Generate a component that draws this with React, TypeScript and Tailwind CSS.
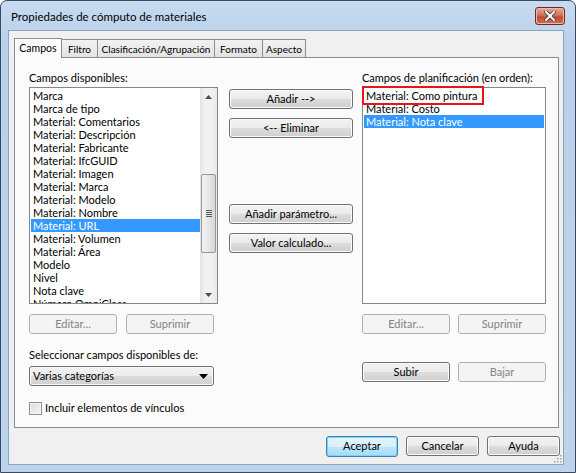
const ui = { fontFamily: '"Segoe UI", Lato, "Noto Sans", sans-serif' }

const available = [
	'Marca',
	'Marca de tipo',
	'Material: Comentarios',
	'Material: Descripción',
	'Material: Fabricante',
	'Material: IfcGUID',
	'Material: Imagen',
	'Material: Marca',
	'Material: Modelo',
	'Material: Nombre',
	'Material: URL',
	'Material: Volumen',
	'Material: Área',
	'Modelo',
	'Nivel',
	'Nota clave',
	'Número OmniClass',
]

const scheduled = ['Material: Como pintura', 'Material: Costo', 'Material: Nota clave']

const tabs = [
	{ label: 'Campos', width: 'w-[48px]' },
	{ label: 'Filtro', width: 'w-[37px]' },
	{ label: 'Clasificación/Agrupación', width: 'w-[118px]' },
	{ label: 'Formato', width: 'w-[49px]' },
	{ label: 'Aspecto', width: 'w-[44px]' },
]

interface BtnProps {
	readonly label: string
	readonly width: string
	readonly disabled?: boolean
	readonly isDefault?: boolean
}

function Btn({ label, width, disabled, isDefault }: BtnProps) {
	if (disabled) {
		return (
			<div
				className={`flex h-[20px] ${width} items-center justify-center whitespace-nowrap rounded-[3px] border border-[#adb2b5] bg-[#f4f4f4] text-[11px] text-[#838383]`}
			>
				{label}
			</div>
		)
	}
	if (isDefault) {
		return (
			<div
				className={`flex h-[21px] ${width} items-center justify-center whitespace-nowrap rounded-[3px] border border-[#3c7fb1] bg-[linear-gradient(#e5f4fc_0%,#d9effb_50%,#bde6fd_50%,#a7d9f5_100%)] text-[11px] text-black shadow-[inset_0_0_0_1px_#7ad6f9]`}
			>
				{label}
			</div>
		)
	}
	return (
		<div
			className={`flex h-[20px] ${width} items-center justify-center whitespace-nowrap rounded-[3px] border border-[#707070] bg-[linear-gradient(#f2f2f2_0%,#ebebeb_50%,#dddddd_50%,#cfcfcf_100%)] text-[11px] text-black shadow-[inset_0_0_0_1px_#fcfcfc]`}
		>
			{label}
		</div>
	)
}

function ScrollBar() {
	return (
		<div className="flex h-full w-[17px] flex-col bg-[linear-gradient(90deg,#e3e3e3,#f1f1f1_30%,#f1f1f1_70%,#e8e8e8)]">
			<div className="flex h-[17px] items-center justify-center">
				<svg width="7" height="4" viewBox="0 0 7 4">
					<path d="M0 4 L3.5 0 L7 4 Z" fill="#4d4d4d" />
				</svg>
			</div>
			<div className="h-[69px]" />
			<div className="mx-[1px] flex h-[79px] items-center justify-center rounded-[2px] border border-[#979797] bg-[linear-gradient(90deg,#f3f3f3,#e6e6e6_50%,#d6d6d6)]">
				<div className="flex flex-col gap-[1px]">
					<div className="h-[1px] w-[6px] bg-[#555]" />
					<div className="h-[1px] w-[6px] bg-[#555]" />
					<div className="h-[1px] w-[6px] bg-[#555]" />
					<div className="h-[1px] w-[6px] bg-[#555]" />
				</div>
			</div>
			<div className="flex-1" />
			<div className="flex h-[17px] items-center justify-center">
				<svg width="7" height="4" viewBox="0 0 7 4">
					<path d="M0 0 L3.5 4 L7 0 Z" fill="#4d4d4d" />
				</svg>
			</div>
		</div>
	)
}

export default function App() {
	return (
		<div
			className="relative h-[473px] w-[576px] overflow-hidden rounded-t-[7px] border border-[#3a4a5c] bg-[linear-gradient(#c7dbf1,#b9d1ea_40px,#bcd3eb)]"
			style={ui}
		>
			{/* title bar */}
			<div className="flex h-[29px] items-center justify-between pl-[10px] pr-[10px]">
				<span className="pt-[2px] text-[11.5px] text-black">Propiedades de cómputo de materiales</span>
				<div className="mt-[1px] flex h-[18px] w-[30px] items-center justify-center rounded-[3px] border border-[#6d2a22] bg-[linear-gradient(#e9a99b,#d2715e_45%,#c04a33_55%,#d26f52)] shadow-[inset_0_0_0_1px_#f0b7a9]">
					<svg width="12" height="10" viewBox="0 0 12 10">
						<path d="M2 1 L10 9 M10 1 L2 9" stroke="#3a3a3a" strokeWidth="3.6" strokeLinecap="square" />
						<path d="M2 1 L10 9 M10 1 L2 9" stroke="#ffffff" strokeWidth="2" strokeLinecap="square" />
					</svg>
				</div>
			</div>

			{/* client */}
			<div className="relative ml-[7px] flex h-[435px] w-[556px] flex-col border border-[#8ea4bd] bg-[#f0f0f0]">
				{/* tabs */}
				<div className="ml-[5px] mt-[7px] flex h-[19px] shrink-0 items-end">
					{tabs.map((t, i) =>
						i === 0 ? (
							<div
								key={t.label}
								className={`relative z-10 -mb-[1px] flex h-[20px] ${t.width} items-center justify-center border border-b-0 border-[#898c95] bg-[#fcfcfc] text-[10.5px] text-black`}
							>
								{t.label}
							</div>
						) : (
							<div
								key={t.label}
								className={`-ml-[1px] flex h-[18px] ${t.width} items-center justify-center whitespace-nowrap border border-b-0 border-[#898c95] bg-[linear-gradient(#f2f2f2,#e3e3e3)] pt-[1px] text-[10px] text-black`}
							>
								{t.label}
							</div>
						),
					)}
				</div>

				{/* panel */}
				<div className="ml-[5px] flex h-[371px] w-[545px] shrink-0 border border-[#898c95] bg-[#fbfbfb] pl-[14px] pt-[12px]">
					{/* left column */}
					<div className="flex w-[189px] flex-col">
						<div className="h-[17px] whitespace-nowrap text-[11px] leading-[15px] text-black">Campos disponibles:</div>
						<div className="flex h-[217px] border border-[#828790] bg-white">
							<div className="flex-1 overflow-hidden pl-[1px] pt-[1px]">
								{available.map((f) => (
									<div
										key={f}
										className={`h-[13px] whitespace-nowrap pl-[2px] text-[11px] leading-[13px] ${f === 'Material: URL' ? 'bg-[#3399ff] text-white' : 'text-black'}`}
									>
										{f}
									</div>
								))}
							</div>
							<ScrollBar />
						</div>
						<div className="mt-[10px] flex gap-[9px]">
							<Btn label="Editar..." width="w-[88px]" disabled />
							<Btn label="Suprimir" width="w-[88px]" disabled />
						</div>
						<div className="mt-[13px] whitespace-nowrap text-[11px] leading-[16px] text-black">Seleccionar campos disponibles de:</div>
						<div className="mt-[3px] flex h-[20px] w-[185px] items-center justify-between rounded-[3px] border border-[#707070] bg-[linear-gradient(#f2f2f2_0%,#ebebeb_50%,#dddddd_50%,#cfcfcf_100%)] pl-[3px] pr-[5px] text-[11px] text-black shadow-[inset_0_0_0_1px_#fcfcfc]">
							<span>Varias categorías</span>
							<svg width="9" height="5" viewBox="0 0 9 5">
								<path d="M0 0 L9 0 L4.5 5 Z" fill="#000" />
							</svg>
						</div>
						<div className="mt-[14px] flex items-center gap-[3px] whitespace-nowrap text-[11px] text-black">
							<div className="h-[13px] w-[13px] border border-[#8f8f8f] bg-[linear-gradient(135deg,#dcdcdc,#f6f6f6)] shadow-[inset_0_0_0_1px_#f4f4f4]" />
							<span>Incluir elementos de vínculos</span>
						</div>
					</div>

					{/* middle column */}
					<div className="ml-[11px] flex w-[124px] flex-col pt-[19px]">
						<Btn label="Añadir -->" width="w-[124px]" />
						<div className="h-[9px]" />
						<Btn label="<-- Eliminar" width="w-[124px]" />
						<div className="h-[66px]" />
						<Btn label="Añadir parámetro..." width="w-[124px]" />
						<div className="h-[9px]" />
						<Btn label="Valor calculado..." width="w-[124px]" />
					</div>

					{/* right column */}
					<div className="ml-[9px] flex w-[184px] flex-col">
						<div className="h-[17px] whitespace-nowrap text-[11px] leading-[15px] text-black">Campos de planificación (en orden):</div>
						<div className="relative h-[217px] border border-[#828790] bg-white pl-[1px] pr-[1px] pt-[1px]">
							{scheduled.map((f) => (
								<div
									key={f}
									className={`h-[13px] whitespace-nowrap pl-[2px] text-[11px] leading-[13px] ${f === 'Material: Nota clave' ? 'bg-[#3399ff] text-white' : 'text-black'}`}
								>
									{f}
								</div>
							))}
							<div className="absolute -left-[1px] -top-[2px] h-[19px] w-[122px] border-2 border-[#e8141b]" />
						</div>
						<div className="mt-[10px] flex gap-[8px]">
							<Btn label="Editar..." width="w-[88px]" disabled />
							<Btn label="Suprimir" width="w-[88px]" disabled />
						</div>
						<div className="mt-[28px] flex gap-[8px]">
							<Btn label="Subir" width="w-[88px]" />
							<Btn label="Bajar" width="w-[88px]" disabled />
						</div>
					</div>
				</div>

				{/* bottom buttons */}
				<div className="mt-[8px] flex items-start justify-end gap-[8px] pr-[3px]">
					<Btn label="Aceptar" width="w-[72px]" isDefault />
					<Btn label="Cancelar" width="w-[73px]" />
					<Btn label="Ayuda" width="w-[73px]" />
				</div>

				{/* size grip */}
				<svg className="absolute bottom-[1px] right-[1px]" width="10" height="10" viewBox="0 0 10 10">
					{[
						[8, 2],
						[8, 5],
						[5, 5],
						[8, 8],
						[5, 8],
						[2, 8],
					].map(([x, y]) => (
						<rect key={`${x}-${y}`} x={x} y={y} width="1.5" height="1.5" fill="#a0a0a0" />
					))}
				</svg>
			</div>
		</div>
	)
}
